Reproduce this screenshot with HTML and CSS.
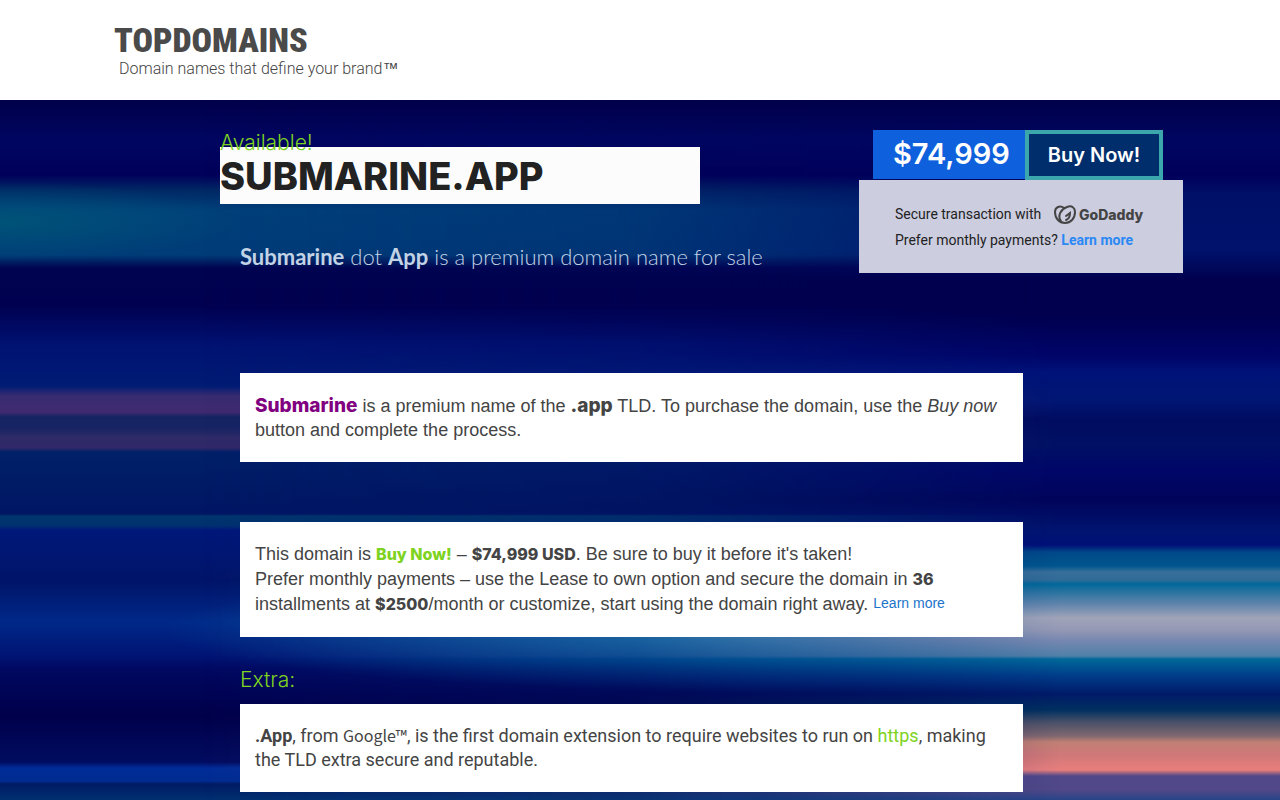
FILE: index.html
```
<!DOCTYPE html>
<html lang="en">

<head>
    <meta charset="UTF-8">
    <meta name="viewport" content="width=device-width, initial-scale=1">
    <title>Submarine.app - TopDomains</title>
    <link rel="stylesheet" href="styles.css">
</head>

<body>
    <header class="header">
        <a class="logo" href="#">TOPDOMAINS</a>
        <p class="tagline">Domain names that define your brand<b>™</b></p>
    </header>
    <main class="main">
        <section class="hero">
            <div class="title">
                <p class="available">Available!</p>
                <h1>SUBMARINE.APP</h1>
                <p class="subtitle"><b>Submarine</b> dot <b>App</b> is a premium domain name for sale</p>
            </div>
            <div class="offer">
                <div class="buy">
                    <span class="price">$74,999</span>
                    <button class="buy-btn" type="button">Buy Now!</button>
                </div>
                <div class="secure">
                    <p>Secure transaction with
                        <svg class="godaddy" width="92" height="20" viewBox="0 0 92 20" role="img" aria-label="GoDaddy">
                            <g fill="none" stroke="#444" stroke-width="2" stroke-linecap="round">
                                <path d="M7 16C3 11 7 4 13 2c5-2 8 1 8 5 0 6-4 11-10 11S1 13 1 7c0-5 5-7 9-4" />
                                <path d="M12 15c3-1 4-4 4-7l-4 3" />
                            </g>
                            <text x="25" y="15">GoDaddy</text>
                        </svg>
                    </p>
                    <p>Prefer monthly payments? <a href="#">Learn more</a></p>
                </div>
            </div>
        </section>
        <section class="content">
            <div class="card card-intro">
                <p><b class="name">Submarine</b> is a premium name of the <b class="tld">.app</b> TLD. To purchase the domain, use the <i>Buy now</i> button and complete the process.</p>
            </div>
            <div class="card card-price">
                <p>This domain is <b class="green">Buy Now!</b> – <b>$74,999 USD</b>. Be sure to buy it before it's taken!<br>
                Prefer monthly payments – use the Lease to own option and secure the domain in <b>36</b> installments at <b>$2500</b>/month or customize, start using the domain right away. <a class="more" href="#">Learn more</a></p>
            </div>
            <h2>Extra:</h2>
            <div class="card card-extra">
                <p><b>.App</b>, from <span class="google">Google™</span>, is the first domain extension to require websites to run on <a href="#">https</a>, making the TLD extra secure and reputable.</p>
            </div>
        </section>
    </main>
</body>

</html>
```
FILE: styles.css
```
* {
    margin: 0;
    padding: 0;
    box-sizing: border-box;
}

body {
    font-family: "Liberation Sans", Arial, sans-serif;
    color: #444;
}

a {
    text-decoration: none;
}

.header {
    height: 100px;
    padding: 21px 114px 0;
    background: #fff;
}

.logo {
    display: block;
    font-family: "Roboto Condensed", "Liberation Sans Narrow", sans-serif;
    font-size: 34px;
    font-weight: 900;
    line-height: 39px;
    color: #4a4a4a;
}

.tagline {
    padding-left: 5px;
    font-family: Roboto, sans-serif;
    font-size: 16px;
    font-weight: 300;
    line-height: 18px;
}

.tagline b {
    font-family: "Liberation Sans", sans-serif;
}

.main {
    position: relative;
    z-index: 0;
    min-height: 700px;
    padding-bottom: 8px;
    background: linear-gradient(#00004a, #000660 40px, #00005a 75px, #002864 90px, #00407a 110px, #003c78 155px, #000450 168px, #000050 205px, #001272 245px, #001c74 286px, #382c70 296px, #402a70 312px, #142462 317px, #182464 328px, #302a68 338px, #302868 348px, #002068 352px, #001664 414px, #00366e 416px, #003070 426px, #00187a 430px, #001468 480px, #002888 522px, #001474 556px, #000860 570px, #00004a 615px, #000c60 662px, #002c98 668px, #002c90 681px, #001a64 684px, #003070 700px);
}

/* left and middle glow */
.main::before {
    content: "";
    position: absolute;
    inset: 0;
    z-index: -1;
    background:
        radial-gradient(ellipse 600px 62px at 760px 530px, #007caf, transparent) no-repeat,
        radial-gradient(ellipse 240px 40px at 0 122px, #005878, transparent) no-repeat;
    opacity: .8;
}

/* right side streaks */
.main::after {
    content: "";
    position: absolute;
    inset: 0;
    z-index: -1;
    background: linear-gradient(#00004a, #000660 40px, #00005a 75px, #001068 95px, #00126c 150px, #00004e 180px, #00004e 215px, #000468 255px, #001278 272px, #001674 300px, #000c60 320px, #001064 345px, #000668 370px, #00045a 400px, #001470 432px, #001078 445px, #004888 452px, #00568e 466px, #38709a 472px, #306c98 480px, #00689a 484px, #20709e 490px, #6084ac 504px, #a0a4b8 518px, #9498b4 530px, #7888b0 540px, #5080a8 556px, #00689a 559px, #003c88 576px, #001a68 594px, #003060 610px, #485068 622px, #806870 636px, #c08074 642px, #d07878 655px, #e87e7c 670px, #504888 676px, #504888 690px, #284488 700px);
    mask-image: linear-gradient(90deg, transparent 200px, rgba(0, 0, 0, .2) 640px, rgba(0, 0, 0, .6) 860px, #000 1060px);
}

.hero {
    display: flex;
    justify-content: space-between;
    padding: 30px 97px 0 220px;
}

.title {
    font-family: Inter, sans-serif;
}

.available {
    position: relative;
    height: 17px;
    font-size: 21px;
    font-weight: 300;
    line-height: 26px;
    color: #7ed321;
}

h1 {
    width: 480px;
    padding: 5px 0 3px;
    background: #fcfcfc;
    font-size: 38px;
    font-weight: 800;
    line-height: 49px;
    color: #222;
}

.subtitle {
    padding: 38px 0 0 20px;
    font-family: Lato, sans-serif;
    font-size: 22px;
    font-weight: 300;
    line-height: 30px;
    color: #c3d3e6;
}

.subtitle b {
    font-weight: 700;
}

.offer {
    width: 324px;
}

.buy {
    display: flex;
    height: 50px;
    padding-left: 14px;
    font-family: Inter, sans-serif;
    color: #fff;
}

.price {
    width: 152px;
    height: 49px;
    padding-left: 20px;
    background: #0f60dc;
    font-size: 29px;
    font-weight: 600;
    line-height: 48px;
}

.buy-btn {
    width: 138px;
    border: 4px solid #3ba7ad;
    background: #002e6c;
    font: 600 20px Inter, sans-serif;
    color: #fff;
}

.secure {
    height: 93px;
    padding: 21px 36px;
    background: #cccddf;
    font-family: Roboto, sans-serif;
    font-size: 14px;
    line-height: 26px;
    color: #222;
}

.secure a {
    font-weight: bold;
    color: #2a88f5;
}

.godaddy {
    margin-left: 9px;
    vertical-align: middle;
}

.godaddy text {
    font: 800 14px Inter, sans-serif;
    fill: #444;
}

.content {
    padding: 100px 257px 0 240px;
}

.card {
    padding: 20px 15px;
    background: #fff;
    font-size: 18px;
    line-height: 25px;
}

.card b {
    font-family: Inter, sans-serif;
    font-size: 16px;
    font-weight: 800;
    line-height: 1;
}

.card-intro {
    padding-top: 21px;
    line-height: 24px;
}

.card .name,
.card .tld {
    font-size: 19px;
}

.card .name {
    color: #800080;
}

.card-price {
    margin-top: 60px;
}

.card .green,
.card-extra a {
    color: #7ed321;
}

.more {
    font-size: 14px;
    line-height: 1;
    vertical-align: 2px;
    color: #1b74c9;
}

h2 {
    margin: 28px 0 9px;
    font-family: Inter, sans-serif;
    font-size: 21px;
    font-weight: 300;
    line-height: 30px;
    color: #7ed321;
}

.card-extra {
    font-family: Roboto, sans-serif;
    line-height: 24px;
}

.card-extra b {
    font-family: Roboto, sans-serif;
    font-size: 18px;
    font-weight: bold;
}

.google {
    font-family: "Noto Sans CJK SC", sans-serif;
    font-size: 16px;
    line-height: 1;
}
```
